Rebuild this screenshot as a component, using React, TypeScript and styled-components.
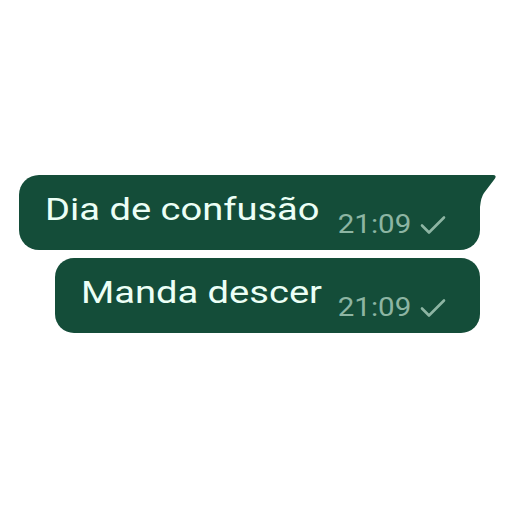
import styled, { createGlobalStyle } from 'styled-components';

const GlobalStyle = createGlobalStyle`
  html, body {
    margin: 0;
    padding: 0;
    background: #ffffff;
  }
  body {
    font-family: Roboto, 'Noto Sans', sans-serif;
  }
`;

const BUBBLE = '#144d39';

type Message = { text: string; time: string; tail?: boolean; indent: number };

const messages: Message[] = [
  { text: 'Dia de confusão', time: '21:09', tail: true, indent: 19 },
  { text: 'Manda descer', time: '21:09', indent: 55 },
];

const Chat = styled.div`
  display: flex;
  flex-direction: column;
  gap: 8px;
  padding-top: 175px;
  width: 512px;
  height: 512px;
  box-sizing: border-box;
`;

const Bubble = styled.div<{ $indent: number; $tail?: boolean }>`
  position: relative;
  box-sizing: border-box;
  margin-left: ${(p) => p.$indent}px;
  width: ${(p) => 480 - p.$indent}px;
  height: 75px;
  display: flex;
  align-items: flex-end;
  padding: 0 0 13px 26px;
  background: ${BUBBLE};
  border-radius: ${(p) => (p.$tail ? '20px 0 20px 20px' : '19px')};
`;

/* the glyphs in the screenshot are drawn ~19% wider than Roboto */
const Text = styled.span`
  display: inline-block;
  color: #ecfff6;
  font-size: 32px;
  line-height: 1;
  margin-bottom: 12px;
  white-space: nowrap;
  transform: scaleX(1.19);
  transform-origin: left bottom;
`;

const Meta = styled.span`
  display: flex;
  align-items: center;
  gap: 9px;
  margin-left: auto;
  margin-right: 34px;
  color: #8db5a3;
  font-size: 25px;
  line-height: 1;
`;

const Time = styled.span`
  display: inline-block;
  transform: scaleX(1.18);
  transform-origin: right bottom;
`;

const Tail = styled.svg`
  position: absolute;
  top: 0;
  right: -17px;
  width: 18px;
  height: 32px;
`;

const Check = () => (
  <svg width="26" height="20" viewBox="0 0 26 20" fill="none">
    <path d="M2 10.5 L9 17.5 L24 2.5" stroke="#8db5a3" strokeWidth="2.6" strokeLinecap="round" strokeLinejoin="round" />
  </svg>
);

export default function App() {
  return (
    <>
      <GlobalStyle />
      <Chat>
        {messages.map((m) => (
          <Bubble key={m.text} $indent={m.indent} $tail={m.tail}>
            <Text>{m.text}</Text>
            <Meta>
              <Time>{m.time}</Time>
              <Check />
            </Meta>
            {m.tail && (
              <Tail viewBox="0 0 18 32">
                <path d="M0 0 H14 Q18 0 16 3.5 L5 18 Q2 22 1 32 H0 Z" fill={BUBBLE} />
              </Tail>
            )}
          </Bubble>
        ))}
      </Chat>
    </>
  );
}
